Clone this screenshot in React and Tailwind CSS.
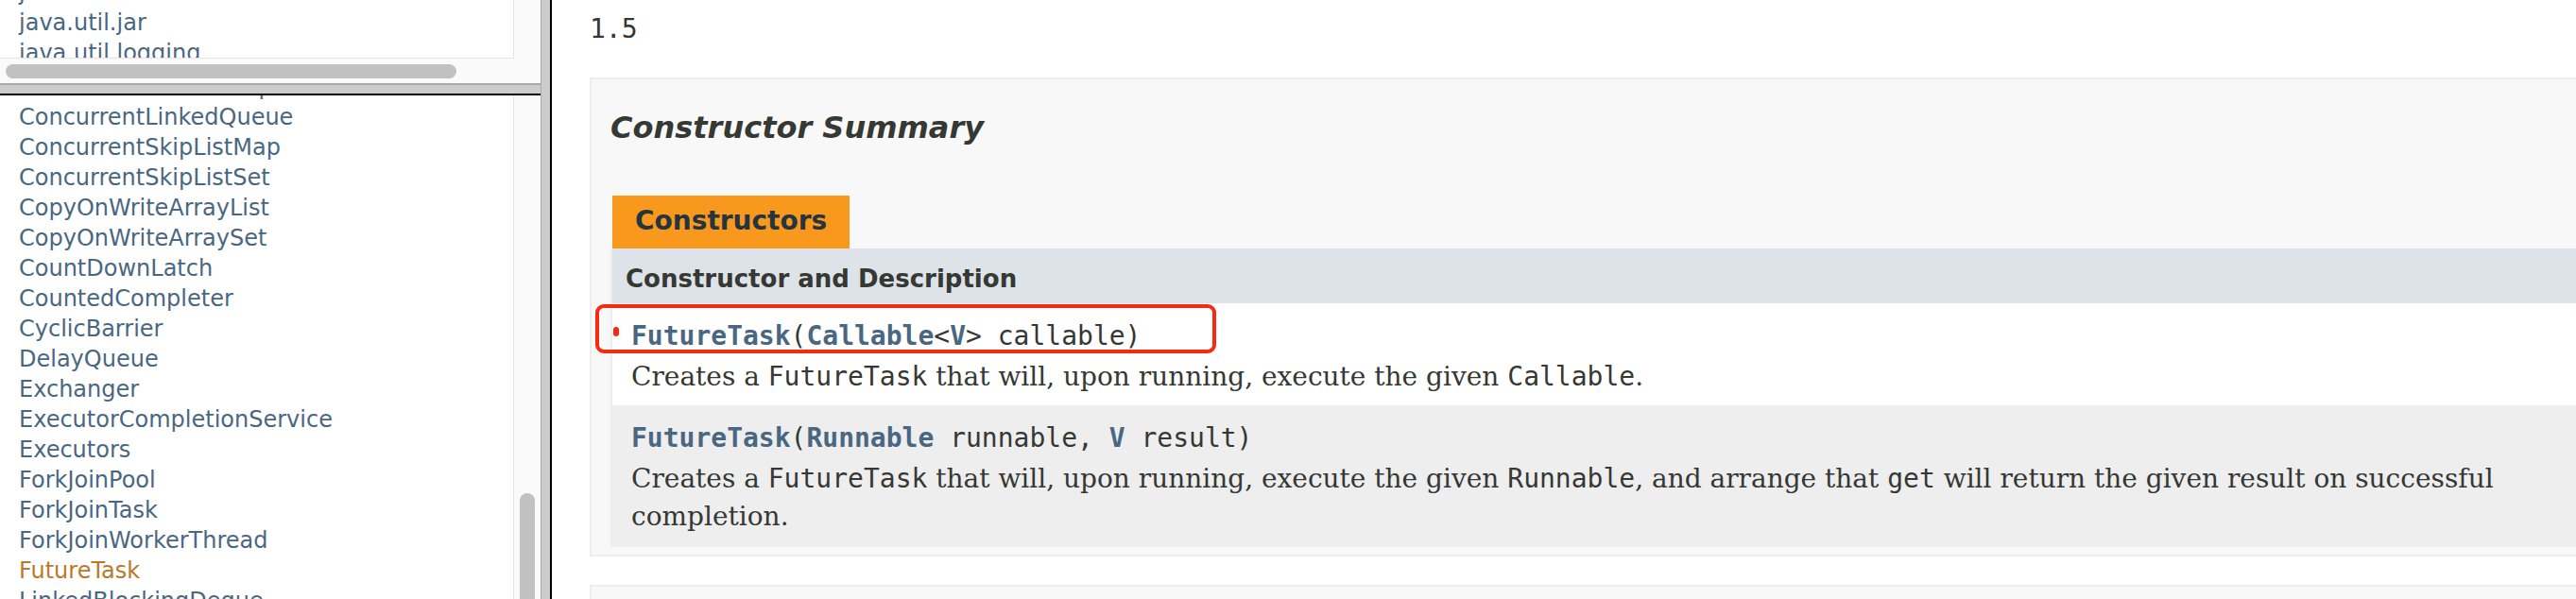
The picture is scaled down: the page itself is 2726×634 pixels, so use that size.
import React from "react";

const sans = "font-['DejaVu_Sans',Arial,sans-serif]";
const mono = "font-['DejaVu_Sans_Mono',monospace]";
const serif = "font-['DejaVu_Serif',Georgia,serif]";

const packages = ["java.util.function", "java.util.jar", "java.util.logging"];

const classes = [
  "ConcurrentLinkedDeque",
  "ConcurrentLinkedQueue",
  "ConcurrentSkipListMap",
  "ConcurrentSkipListSet",
  "CopyOnWriteArrayList",
  "CopyOnWriteArraySet",
  "CountDownLatch",
  "CountedCompleter",
  "CyclicBarrier",
  "DelayQueue",
  "Exchanger",
  "ExecutorCompletionService",
  "Executors",
  "ForkJoinPool",
  "ForkJoinTask",
  "ForkJoinWorkerThread",
  "FutureTask",
  "LinkedBlockingDeque",
];

const NavItem = ({ name }) => (
  <li
    className={`pt-[4px] leading-[28px] text-[24px] whitespace-nowrap ${
      name === "FutureTask" ? "text-[#bb7a2a]" : "text-[#4a6782]"
    }`}
  >
    {name}
  </li>
);

const Link = ({ children }) => <span className="font-bold text-[#4a6782]">{children}</span>;

const Code = ({ children }) => <span className={mono}>{children}</span>;

const LeftFrame = () => (
  <div className={`w-[572px] shrink-0 flex flex-col ${sans}`}>
    {/* package list (scrolled) */}
    <div className="h-[88px] bg-[#fafafa] flex flex-col">
      <div className="w-[544px] h-[62px] bg-white border-r border-b border-[#e6e6e6] overflow-hidden pl-[20px]">
        <ul className="-mt-[26px]">
          {packages.map((p) => (
            <NavItem key={p} name={p} />
          ))}
        </ul>
      </div>
      <div className="pl-[6px] pt-[6px]">
        <div className="w-[477px] h-[15px] rounded-full bg-[#c1c1c1]" />
      </div>
    </div>

    {/* frame divider */}
    <div className="h-[2px] bg-[#a9a9a9]" />
    <div className="h-[9px] bg-[#cccccc]" />
    <div className="h-[2px] bg-black" />

    {/* class list (scrolled) */}
    <div className="flex-1 flex min-h-0">
      <div className="w-[543px] bg-white overflow-hidden pl-[20px]">
        <ul className="-mt-[27px]">
          {classes.map((c) => (
            <NavItem key={c} name={c} />
          ))}
        </ul>
      </div>
      <div className="w-[29px] bg-[#fafafa] border-l border-[#e6e6e6] pt-[421px] pl-[6px]">
        <div className="w-[16px] h-[200px] rounded-t-full bg-[#c1c1c1]" />
      </div>
    </div>
  </div>
);

const ContentFrame = () => (
  <div className={`flex-1 min-w-0 bg-white overflow-hidden text-[#353833] ${sans}`}>
    <div className="w-[2300px] pl-[40px] pt-[11px]">
      <div className={`${mono} text-[28px] leading-[40px]`}>1.5</div>

      <div className="mt-[31px] border-2 border-[#ededed] bg-[#f8f8f8] pl-[20px] pb-[8px]">
        <h3 className="mt-[33px] text-[32px] leading-[37px] font-bold italic">Constructor Summary</h3>

        <div className="mt-[53px] pl-[2px] flex">
          <span className="h-[56px] pt-[11px] px-[24px] leading-[32px] text-[28px] font-bold text-[#253441] bg-[#f8981d]">
            Constructors
          </span>
        </div>

        <div className="border-l-2 border-b-2 border-[#eeeeee]">
          <div className="h-[58px] pt-[17px] pl-[14px] bg-[#dee3e9] text-[26px] leading-[30px] font-bold">
            Constructor and Description
          </div>

          <div className="relative h-[108px] bg-white pl-[20px] pt-[15px]">
            <div className={`${mono} text-[28px] leading-[40px] whitespace-nowrap`}>
              <Link>FutureTask</Link>(<Link>Callable</Link>&lt;<Link>V</Link>&gt; callable)
            </div>
            <div className={`${serif} mt-[3px] text-[28px] leading-[40px] whitespace-nowrap`}>
              Creates a <Code>FutureTask</Code> that will, upon running, execute the given <Code>Callable</Code>.
            </div>
            {/* red markup around the first constructor */}
            <div className="absolute -left-[18px] top-[1px] w-[657px] h-[52px] border-4 border-[#f7290f] rounded-[9px]" />
            <div className="absolute left-[1px] top-[25px] w-[6px] h-[10px] rounded-full bg-[#f7290f]" />
          </div>

          <div className="bg-[#eeeeef] pl-[20px] pt-[15px] pb-[10px]">
            <div className={`${mono} text-[28px] leading-[40px] whitespace-nowrap`}>
              <Link>FutureTask</Link>(<Link>Runnable</Link> runnable, <Link>V</Link> result)
            </div>
            <div className={`${serif} mt-[3px] text-[28px] leading-[40px] whitespace-nowrap`}>
              Creates a <Code>FutureTask</Code> that will, upon running, execute the given <Code>Runnable</Code>,
              and arrange that <Code>get</Code> will return the given result on successful
              <br />
              completion.
            </div>
          </div>
        </div>
      </div>

      <div className="mt-[30px] h-[100px] border-2 border-[#ededed] bg-[#f8f8f8]" />
    </div>
  </div>
);

export default function App() {
  return (
    <div className="w-[2726px] h-[634px] flex overflow-hidden bg-white">
      <LeftFrame />
      <div className="w-[12px] shrink-0 bg-[#cccccc] border-l border-[#ababab] border-r-2 border-r-black" />
      <ContentFrame />
    </div>
  );
}
